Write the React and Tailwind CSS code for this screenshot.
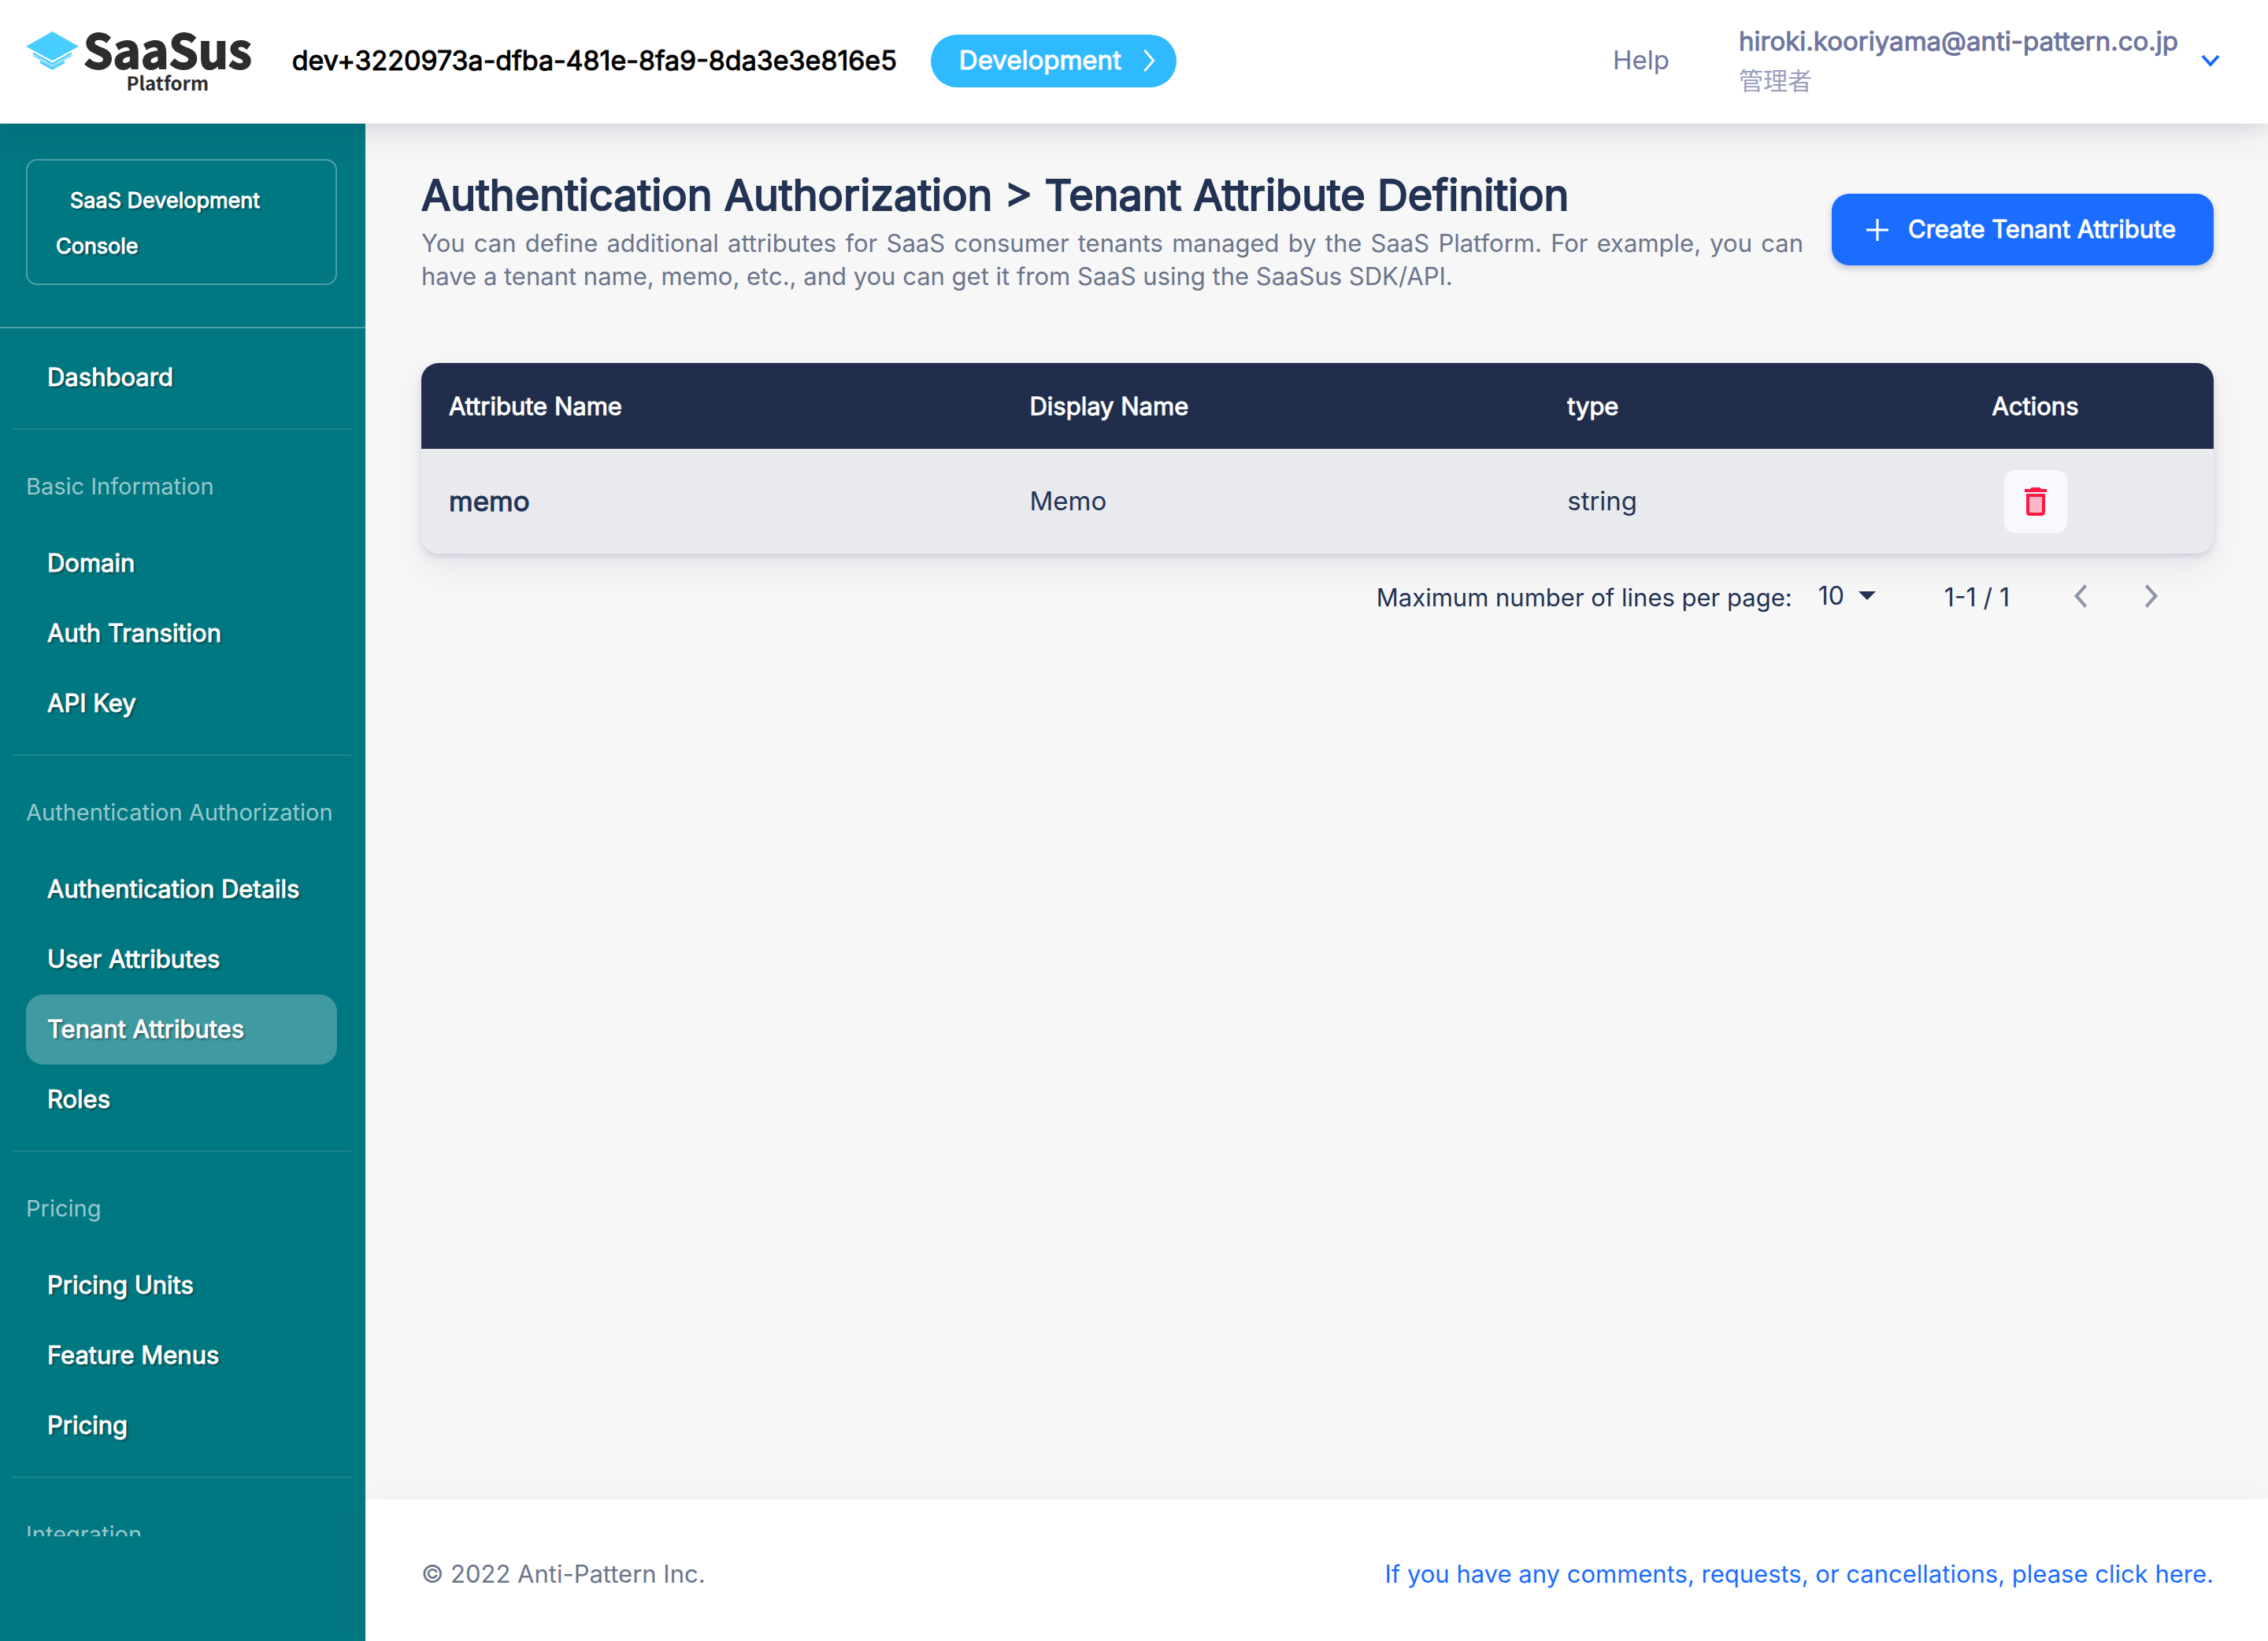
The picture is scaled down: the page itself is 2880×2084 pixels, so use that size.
import React from "react";

const boldStroke = "[-webkit-text-stroke:1px_currentColor]";

function Logo() {
  return (
    <a href="#" aria-label="SaaSus Platform" className="flex gap-[6px] text-[#2d2d2d]">
      <svg viewBox="0 0 67 49" className="mt-[40px] h-[49px] w-[67px]" fill="none">
        <path d="M33.500 0 67 19 33.500 37 0 19Z" fill="#47cdff" />
        <path d="M9 27.500 33.500 41 58 27.500" stroke="#47cdff" strokeWidth="2.500" />
        <path d="M9 30.500 33.500 44 58 30.500" stroke="#47cdff" strokeWidth="1.200" />
        <path d="M18 38.500 33.500 47 49 38.500" stroke="#47cdff" strokeWidth="3" />
      </svg>
      <span className="flex flex-col items-center font-bold [font-family:'Noto_Sans_CJK_JP',sans-serif]">
        <span className="mt-[29px] text-[60px] leading-[64px] [-webkit-text-stroke:2px_currentColor]">SaaSus</span>
        <span className="text-[24px] leading-[24px]">Platform</span>
      </span>
    </a>
  );
}

function Chevron({ d, className }) {
  return (
    <svg viewBox="0 0 24 24" className={className} fill="none" stroke="currentColor" aria-hidden="true">
      <path d={d} />
    </svg>
  );
}

function Header() {
  return (
    <header className="relative z-10 flex h-[157px] shrink-0 items-center bg-white pr-[61px] pb-[3px] pl-[33px] shadow-[0_4px_50px_rgba(34,51,84,0.14),0_2px_20px_rgba(34,51,84,0.10)]">
      <div className="self-start">
        <Logo />
      </div>
      <p className={"ml-[51px] text-[34px] leading-[48px] text-black " + boldStroke}>
        dev+3220973a-dfba-481e-8fa9-8da3e3e816e5
      </p>
      <button
        type="button"
        className="ml-[43px] flex h-[67px] items-center rounded-full bg-[#2fb9ff] pr-[18px] pl-[36px] text-[33px] text-white"
      >
        <span className="[-webkit-text-stroke:1px_currentColor]">Development</span>
        <Chevron d="M8 2.500 16 12 8 21.500" className="ml-[18px] size-[34px] stroke-[2]" />
      </button>
      <a href="#" className="ml-auto text-[33px] text-[#6e759f]">
        Help
      </a>
      <button type="button" className="ml-[88px] flex items-center gap-[29px] text-left">
        <span className="flex flex-col">
          <span className={"text-[33px] leading-[52px] text-[#6e759f] " + boldStroke}>
            hiroki.kooriyama@anti-pattern.co.jp
          </span>
          <span className="text-[31px] leading-[50px] text-[#9a9fbe]">管理者</span>
        </span>
        <Chevron d="M2 6 12 17 22 6" className="size-[24px] stroke-[4] text-[#1a6dff]" />
      </button>
    </header>
  );
}

const sections = [
  { items: ["Dashboard"] },
  { title: "Basic Information", items: ["Domain", "Auth Transition", "API Key"] },
  {
    title: "Authentication Authorization",
    items: ["Authentication Details", "User Attributes", "Tenant Attributes", "Roles"],
  },
  { title: "Pricing", items: ["Pricing Units", "Feature Menus", "Pricing"] },
  { title: "Integration", items: [] },
];

function Sidebar() {
  return (
    <aside className="flex w-[464px] shrink-0 flex-col overflow-hidden bg-[#007882] pb-[133px] text-white">
      <div className="border-b-2 border-white/30 pt-[45px] pr-[36px] pb-[53px] pl-[33px]">
        <a
          href="#"
          className={
            "block rounded-[14px] border-2 border-white/30 px-[36px] pt-[22px] pb-[18px] indent-[18px] text-[27px] leading-[58px] text-shadow-[2px_2px_3px_rgba(0,0,0,0.5)] " +
            boldStroke
          }
        >
          SaaS Development Console
        </a>
      </div>
      <nav className="min-h-0 flex-1 overflow-hidden pt-[18px]">
        {sections.map((section, i) => (
          <section key={i}>
            {section.title && (
              <h2 className="flex h-[125px] items-center pt-[18px] pl-[33px] text-[29px] text-white/60">
                {section.title}
              </h2>
            )}
            <ul className="mr-[36px] ml-[33px]">
              {section.items.map((item) => (
                <li key={item}>
                  <a
                    href="#"
                    aria-current={item === "Tenant Attributes" ? "page" : undefined}
                    className={
                      "flex h-[89px] items-center rounded-[22px] pl-[27px] text-[31px] text-shadow-[2px_2px_3px_rgba(0,0,0,0.5)] [-webkit-text-stroke:1px_currentColor] " +
                      (item === "Tenant Attributes" ? "bg-white/25" : "")
                    }
                  >
                    {item}
                  </a>
                </li>
              ))}
            </ul>
            {section.items.length > 0 && <hr className="mt-[20px] mr-[18px] ml-[16px] border-t-2 border-white/10" />}
          </section>
        ))}
      </nav>
    </aside>
  );
}

function AttributeTable() {
  return (
    <div className="mt-[89px] overflow-hidden rounded-[22px] shadow-[0_18px_40px_rgba(159,162,191,0.18),0_4px_8px_rgba(159,162,191,0.4)]">
      <table className="w-full table-fixed text-left text-[#223354]">
        <thead className="bg-[#202e4b] text-[31px] leading-[45px] text-white">
          <tr className="h-[109px]">
            <th className={"w-[32.4%] px-[35px] font-normal " + boldStroke}>Attribute Name</th>
            <th className={"w-[30%] px-[35px] font-normal " + boldStroke}>Display Name</th>
            <th className={"w-[17.7%] px-[35px] font-normal " + boldStroke}>type</th>
            <th className={"px-[35px] text-center font-normal " + boldStroke}>Actions</th>
          </tr>
        </thead>
        <tbody className="bg-[#e9eaee] text-[33px]">
          <tr className="h-[133px]">
            <td className={"px-[35px] text-[35px] " + boldStroke}>memo</td>
            <td className="px-[35px]">Memo</td>
            <td className="px-[35px]">string</td>
            <td className="px-[35px]">
              <button
                type="button"
                aria-label="Delete attribute"
                className="mx-auto flex size-[80px] items-center justify-center rounded-[14px] bg-[#f8f9fc] text-[#ff1943]"
              >
                <svg viewBox="0 0 24 24" className="size-[48px]" fill="currentColor" aria-hidden="true">
                  <path d="M8 9h8v10H8z" opacity=".3" />
                  <path d="M15.500 4l-1-1h-5l-1 1H5v2h14V4zM6 19c0 1.100.9 2 2 2h8c1.100 0 2-.9 2-2V7H6v12zM8 9h8v10H8V9z" />
                </svg>
              </button>
            </td>
          </tr>
        </tbody>
      </table>
    </div>
  );
}

function Pagination() {
  return (
    <div className="mt-[18px] flex h-[76px] items-center justify-end pr-[63px] text-[31px] text-[#223354]">
      <label htmlFor="rows">Maximum number of lines per page:</label>
      <div className="ml-[33px] flex items-center pb-[5px]">
        <select id="rows" className="w-[51px] appearance-none bg-transparent text-[32px]">
          <option>10</option>
        </select>
        <svg viewBox="0 0 22 11" className="h-[11px] w-[22px]" fill="currentColor" aria-hidden="true">
          <path d="M0 0h22L11 11z" />
        </svg>
      </div>
      <span className="ml-[87px] text-[32px]">1-1 / 1</span>
      <button type="button" aria-label="Previous page" className="ml-[74px] pb-[5px] text-[#8d95a6]">
        <Chevron d="M17 2 8 12 17 22" className="size-[32px] stroke-[3]" />
      </button>
      <button type="button" aria-label="Next page" className="ml-[58px] pb-[5px] text-[#8d95a6]">
        <Chevron d="M7 2 16 12 7 22" className="size-[32px] stroke-[3]" />
      </button>
    </div>
  );
}

export default function App() {
  return (
    <div className="flex h-screen flex-col bg-[#f7f7f7] [font-family:Inter,'Noto_Sans_CJK_JP',sans-serif]">
      <Header />
      <div className="flex min-h-0 flex-1">
        <Sidebar />
        <div className="flex min-w-0 flex-1 flex-col">
          <main className="flex-1 pt-[54px] pr-[69px] pl-[71px]">
            <div className="flex items-center justify-between gap-[36px]">
              <div>
                <h1 className="text-[54px] leading-[74px] text-[#223354] [-webkit-text-stroke:2px_currentColor]">
                  Authentication Authorization &gt; Tenant Attribute Definition
                </h1>
                <p className="mt-[3px] text-justify text-[31px] leading-[42px] text-[#6b758b]">
                  You can define additional attributes for SaaS consumer tenants managed by the SaaS Platform. For
                  example, you can have a tenant name, memo, etc., and you can get it from SaaS using the SaaSus
                  SDK/API.
                </p>
              </div>
              <button
                type="button"
                className="flex h-[91px] shrink-0 items-center gap-[25px] rounded-[22px] bg-[#1a6dff] pr-[48px] pl-[44px] text-[31px] text-white shadow-[0_4px_8px_rgba(34,51,84,0.25)]"
              >
                <svg viewBox="0 0 28 28" className="size-[28px]" stroke="currentColor" strokeWidth="3" aria-hidden="true">
                  <path d="M14 0v28M0 14h28" />
                </svg>
                <span className="[-webkit-text-stroke:1px_currentColor]">Create Tenant Attribute</span>
              </button>
            </div>
            <AttributeTable />
            <Pagination />
          </main>
          <footer className="flex h-[180px] shrink-0 items-center justify-between bg-white pt-[10px] pr-[69px] pl-[71px] text-[31px] shadow-[0_0_50px_rgba(34,51,84,0.04)]">
            <p className="text-[#6b758b]">© 2022 Anti-Pattern Inc.</p>
            <a href="#" className="text-[#1a6dff]">
              If you have any comments, requests, or cancellations, please click here.
            </a>
          </footer>
        </div>
      </div>
    </div>
  );
}
